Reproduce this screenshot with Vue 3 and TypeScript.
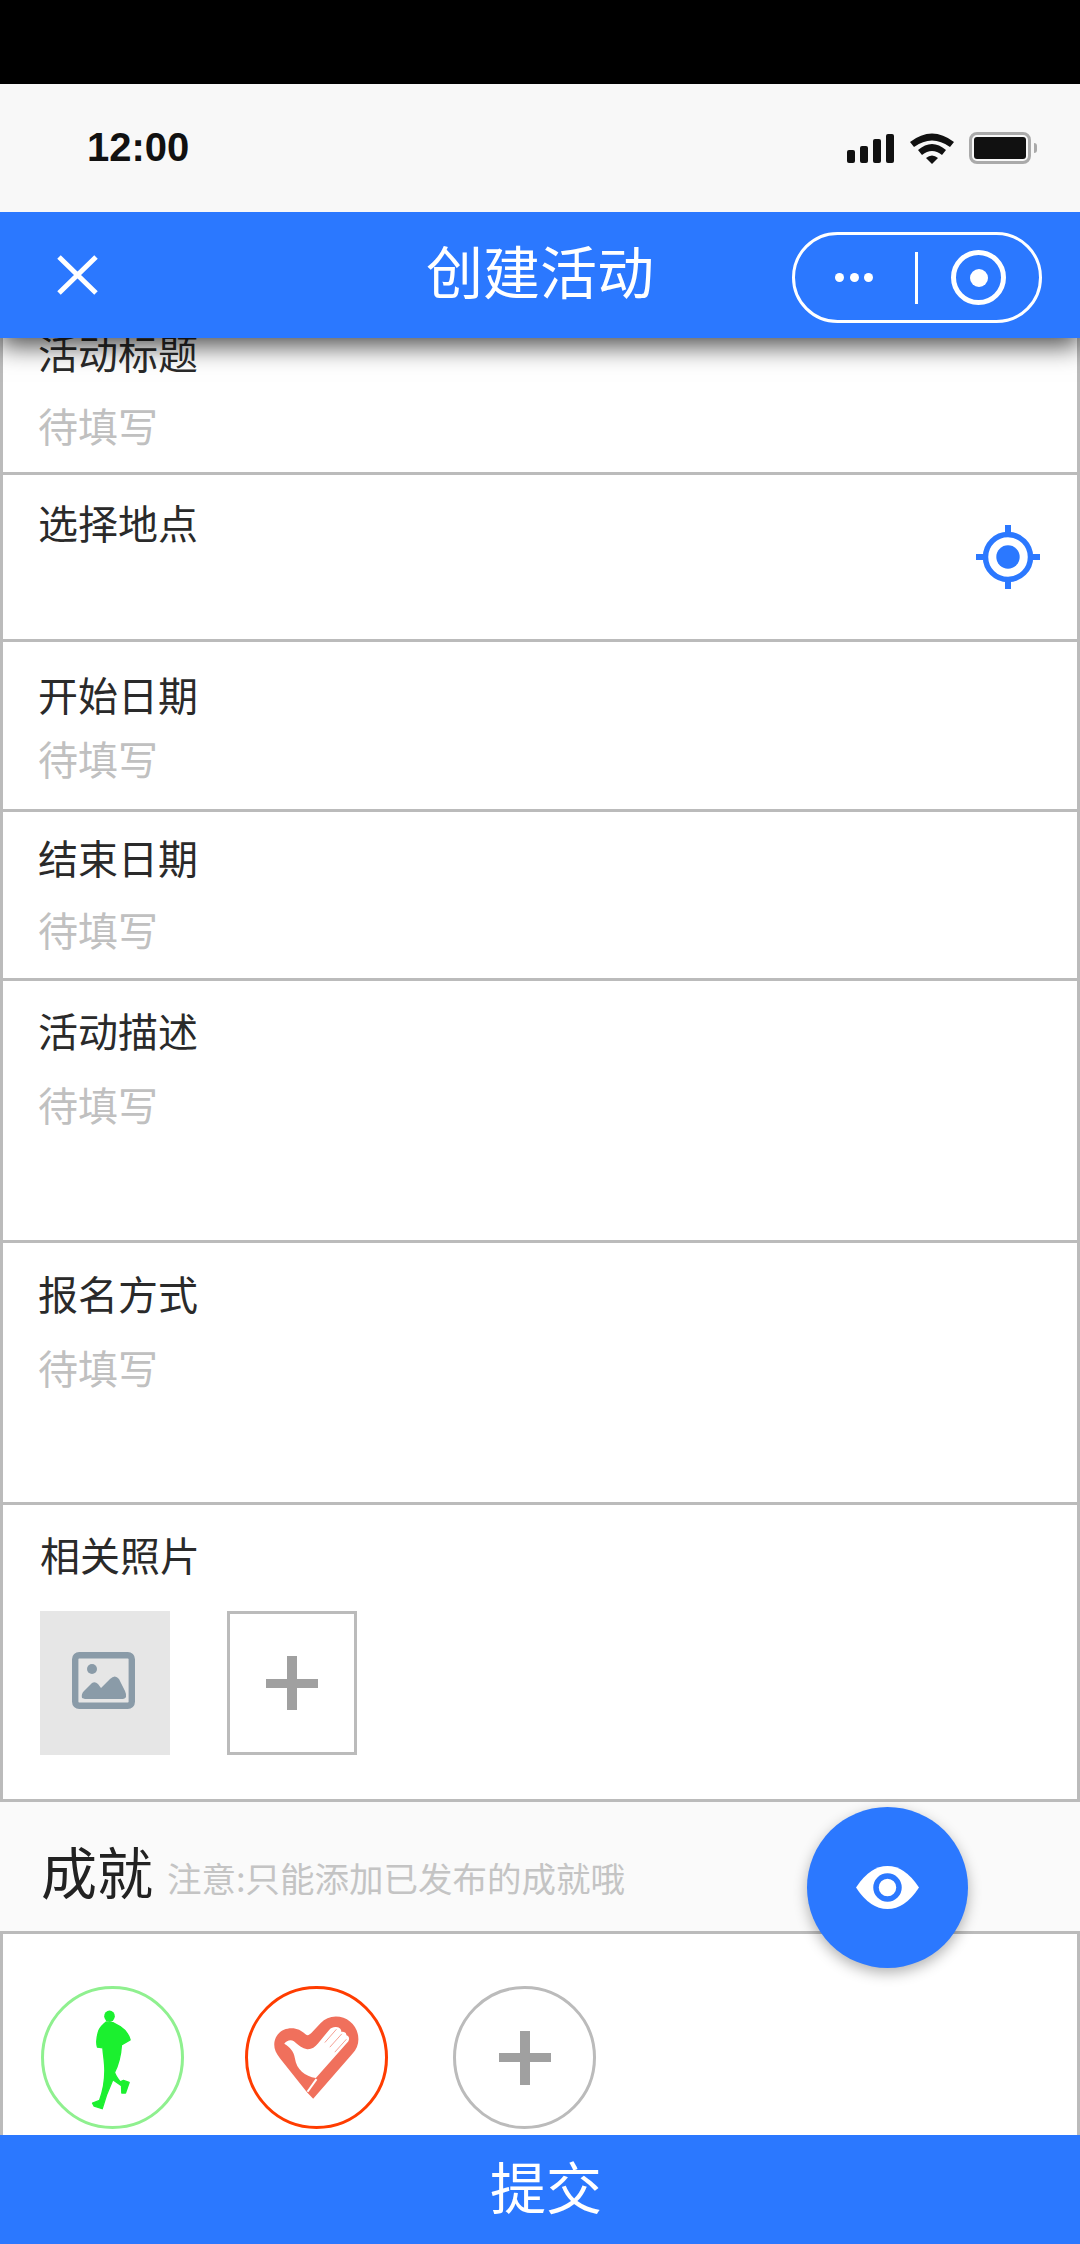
<script setup lang="ts">
interface Field {
  label: string
  cls: string
  placeholder?: string
}

const fields: Field[] = [
  { label: '活动标题', cls: 'f-title', placeholder: '待填写' },
  { label: '选择地点', cls: 'f-place' },
  { label: '开始日期', cls: 'f-start', placeholder: '待填写' },
  { label: '结束日期', cls: 'f-end', placeholder: '待填写' },
  { label: '活动描述', cls: 'f-desc', placeholder: '待填写' },
  { label: '报名方式', cls: 'f-sign', placeholder: '待填写' },
]
</script>

<template>
  <div class="phone">
    <div class="notch"></div>
    <div class="status">
      <span class="time">12:00</span>
      <div class="status-icons">
        <div class="signal"><i></i><i></i><i></i><i></i></div>
        <svg class="wifi" viewBox="0 0 44 32" width="44" height="32">
          <path d="M0 10 Q22 -7 44 10 L40 15 Q22 2 4 15 Z" fill="#111" />
          <path d="M8 18 Q22 6 36 18 L32 23 Q22 15 12 23 Z" fill="#111" />
          <path d="M16 26 Q22 21 28 26 L22 32 Z" fill="#111" />
        </svg>
        <div class="battery"><div class="battery-fill"></div></div>
        <div class="battery-nub"></div>
      </div>
    </div>

    <div class="nav">
      <svg class="close" viewBox="0 0 41 40" width="41" height="40">
        <path d="M2 2 L39 38 M39 2 L2 38" stroke="#fff" stroke-width="5" fill="none" />
      </svg>
      <span class="nav-title">创建活动</span>
      <div class="capsule">
        <div class="dots"><i></i><i></i><i></i></div>
        <div class="capsule-line"></div>
        <div class="capsule-target"><div></div></div>
      </div>
    </div>

    <div class="scroll">
      <div class="form">
        <div v-for="f in fields" :key="f.label" class="field" :class="f.cls">
          <div class="label">{{ f.label }}</div>
          <div v-if="f.placeholder" class="placeholder">{{ f.placeholder }}</div>
          <svg v-if="f.cls === 'f-place'" class="locate" viewBox="0 0 64 64" width="64" height="64">
            <circle cx="32" cy="32" r="22.5" fill="none" stroke="#2b78ff" stroke-width="5.5" />
            <circle cx="32" cy="32" r="11.7" fill="#2b78ff" />
            <path d="M32 0 V10 M32 54 V64 M0 32 H10 M54 32 H64" stroke="#2b78ff" stroke-width="6" />
          </svg>
        </div>

        <div class="field f-photo">
          <div class="label">相关照片</div>
          <div class="photos">
            <div class="photo">
              <svg viewBox="0 0 63 57" width="63" height="57">
                <rect x="3.2" y="3.2" width="56.6" height="50.6" rx="4" fill="none" stroke="#8a9ba8" stroke-width="6.4" />
                <circle cx="20" cy="17" r="5" fill="#8a9ba8" />
                <path d="M10 46 Q9 42 12 39 L20 31 Q23 29 26 32 L29 36 L38 27 Q43 22 47 27 L53 39 Q56 46 51 47 L13 47 Z" fill="#8a9ba8" />
              </svg>
            </div>
            <div class="add-photo"><span class="plus"></span></div>
          </div>
        </div>
      </div>

      <div class="section">
        <span class="section-title">成就</span>
        <span class="section-note">注意:只能添加已发布的成就哦</span>
      </div>

      <div class="badges">
        <div class="badge badge-run">
          <svg viewBox="0 0 430 430" width="143" height="143">
            <g transform="translate(-62 -18)" fill="#1bf02f">
              <ellipse cx="268" cy="109" rx="16" ry="17" />
              <path
                d="M258 126 C248 136 238 142 234 158 C230 172 228 190 232 202 L248 204 C250 228 254 250 254 272 C254 300 248 335 238 362 L217 370 L222 379 L246 387 C252 365 262 335 278 300 L304 318 L305 340 L316 340 L327 308 L310 302 L300 306 C292 296 286 288 283 278 C296 252 302 225 304 195 L330 180 C326 165 318 152 300 140 L278 128 Z"
                stroke="#1bf02f"
                stroke-width="4"
                stroke-linejoin="round"
              />
            </g>
          </svg>
        </div>
        <div class="badge badge-heart">
          <svg viewBox="0 0 430 430" width="143" height="143">
            <g transform="translate(-45 -48)">
              <path
                d="M250 387 L232 368 L150 265 C138 250 133 238 133 225 C133 195 156 175 185 175 C203 175 216 183 228 194 C234 199 240 194 246 188 L272 160 C285 147 300 140 318 140 C356 140 386 170 386 208 C386 225 380 238 368 252 Z"
                fill="#f0705c"
              />
              <path
                d="M163 222 C170 212 182 208 192 214 C205 226 218 236 232 238 C245 239 255 232 265 220 L298 180 C305 172 315 170 322 172 C330 172 335 180 335 186 C345 184 350 190 350 196 C358 198 360 206 356 214 L258 325 C225 318 200 300 195 265 C192 245 180 232 163 222 Z"
                fill="#fff"
              />
              <path d="M285 218 L320 178 M300 232 L336 192 M315 247 L350 208" stroke="#f0705c" stroke-width="2" fill="none" />
              <path d="M233 366 L260 328" stroke="#fff" stroke-width="6" fill="none" />
            </g>
          </svg>
        </div>
        <div class="badge badge-add"><span class="plus"></span></div>
      </div>

      <div class="fab">
        <svg viewBox="0 0 63 43" width="63" height="43">
          <path d="M0 21.5 Q14 0 31.5 0 Q49 0 63 21.5 Q49 43 31.5 43 Q14 43 0 21.5 Z" fill="#fff" />
          <circle cx="31.5" cy="21.5" r="11.5" fill="#fff" stroke="#2b78ff" stroke-width="5.5" />
        </svg>
      </div>
    </div>

    <div class="submit">提交</div>
  </div>
</template>

<style scoped>
.phone {
  width: 1080px;
  height: 2244px;
  display: flex;
  flex-direction: column;
  overflow: hidden;
  background: #fff;
  font-family: "Noto Sans CJK SC", "Liberation Sans", sans-serif;
  color: #222;
}

.notch {
  height: 84px;
  background: #000;
  flex-shrink: 0;
}

.status {
  height: 128px;
  flex-shrink: 0;
  background: #f8f8f8;
  display: flex;
  align-items: center;
  justify-content: space-between;
  padding: 0 43px 2px 87px;
  box-sizing: border-box;
}

.time {
  font-family: "Liberation Sans", sans-serif;
  font-weight: 700;
  font-size: 40px;
  color: #111;
}

.status-icons {
  display: flex;
  align-items: center;
  margin-top: 2px;
}

.signal {
  display: flex;
  align-items: flex-end;
  gap: 5px;
  height: 30px;
  margin-right: 16px;
}

.signal i {
  width: 8px;
  background: #111;
  border-radius: 2px;
}

.signal i:nth-child(1) { height: 13px; }
.signal i:nth-child(2) { height: 17px; }
.signal i:nth-child(3) { height: 24px; }
.signal i:nth-child(4) { height: 29px; }

.wifi {
  margin-right: 15px;
}

.battery {
  width: 62px;
  height: 32px;
  box-sizing: border-box;
  border: 3px solid #aaa;
  border-radius: 8px;
  padding: 2px;
}

.battery-fill {
  height: 100%;
  background: #111;
  border-radius: 3px;
}

.battery-nub {
  width: 3px;
  height: 10px;
  background: #aaa;
  border-radius: 0 3px 3px 0;
  margin-left: 3px;
}

.nav {
  height: 126px;
  flex-shrink: 0;
  background: #2b78ff;
  position: relative;
  z-index: 2;
  box-shadow: 0 8px 24px rgba(0, 0, 0, 0.7);
  clip-path: inset(0 0 -50px 0);
  display: flex;
  align-items: center;
  justify-content: space-between;
  padding: 0 38px 0 57px;
  box-sizing: border-box;
}

.nav-title {
  position: absolute;
  left: 0;
  right: 0;
  text-align: center;
  font-size: 57px;
  line-height: 114px;
  color: #fff;
  top: 0;
}

.capsule {
  width: 250px;
  height: 91px;
  box-sizing: border-box;
  border: 3px solid #fff;
  border-radius: 46px;
  display: flex;
  align-items: center;
  position: relative;
  z-index: 1;
  margin-top: 5px;
}

.dots {
  display: flex;
  gap: 5.5px;
  margin-left: 40px;
}

.dots i {
  width: 9px;
  height: 9px;
  border-radius: 50%;
  background: #fff;
}

.capsule-line {
  width: 3px;
  height: 52px;
  background: #fff;
  margin-left: 42px;
}

.capsule-target {
  width: 55px;
  height: 55px;
  box-sizing: border-box;
  border: 5.5px solid #fff;
  border-radius: 50%;
  margin-left: 33px;
  display: flex;
  align-items: center;
  justify-content: center;
}

.capsule-target div {
  width: 18px;
  height: 18px;
  border-radius: 50%;
  background: #fff;
}

.scroll {
  flex: 1;
  min-height: 0;
  overflow: hidden;
  position: relative;
}

.form {
  margin-top: -30px;
}

.field {
  position: relative;
  box-sizing: border-box;
  border-left: 3px solid #bbb;
  border-right: 3px solid #bbb;
  border-bottom: 3px solid #bbb;
  padding: 0 0 0 35px;
}

.label {
  font-size: 40px;
  line-height: 56px;
  color: #2a2a2a;
}

.placeholder {
  font-size: 40px;
  line-height: 56px;
  color: #c0c0c0;
}

.f-title {
  height: 167px;
  padding-top: 16px;
}

.f-title .placeholder { margin-top: 17px; }

.f-place {
  height: 167px;
  padding-top: 19px;
}

.locate {
  position: absolute;
  right: 37px;
  top: 50px;
}

.f-start {
  height: 170px;
  padding-top: 24px;
}

.f-start .placeholder { margin-top: 8px; }

.f-end {
  height: 169px;
  padding-top: 17px;
}

.f-end .placeholder { margin-top: 16px; }

.f-desc {
  height: 262px;
  padding-top: 21px;
}

.f-desc .placeholder { margin-top: 18px; }

.f-sign {
  height: 262px;
  padding-top: 22px;
}

.f-sign .placeholder { margin-top: 18px; }

.f-photo {
  height: 297px;
  padding-top: 21px;
  padding-left: 37px;
}

.photos {
  display: flex;
  gap: 57px;
  margin-top: 29px;
}

.photo {
  width: 130px;
  height: 144px;
  background: #e6e6e6;
  display: flex;
  align-items: center;
  justify-content: center;
}

.photo svg {
  margin: -6px 0 0 -3px;
}

.add-photo {
  width: 130px;
  height: 144px;
  box-sizing: border-box;
  border: 3px solid #bbb;
  display: flex;
  align-items: center;
  justify-content: center;
}

.plus {
  display: block;
  width: 52px;
  height: 54px;
  background:
    linear-gradient(#a0a0a0, #a0a0a0) center / 100% 9px no-repeat,
    linear-gradient(#a0a0a0, #a0a0a0) center / 10px 100% no-repeat;
}

.section {
  height: 132px;
  box-sizing: border-box;
  background: #fafafa;
  border-bottom: 3px solid #bbb;
  display: flex;
  align-items: center;
  padding-left: 41px;
}

.section-title {
  font-size: 56px;
  color: #222;
  margin-top: 6px;
}

.section-note {
  font-size: 34.5px;
  color: #c4c4c4;
  margin-left: 14px;
  margin-top: 20px;
}

.badges {
  border-left: 3px solid #bbb;
  border-right: 3px solid #bbb;
  display: flex;
  gap: 61px;
  padding: 52px 0 0 38px;
  height: 300px;
  box-sizing: border-box;
}

.badge {
  width: 143px;
  height: 143px;
  box-sizing: border-box;
  border-radius: 50%;
  border: 3px solid #bbb;
  display: flex;
  align-items: center;
  justify-content: center;
  flex-shrink: 0;
}

.badge svg {
  flex-shrink: 0;
}

.badge-run { border-color: #8ff08f; }
.badge-heart { border-color: #ff3c00; }
.badge-add { margin-left: 4px; }

.fab {
  position: absolute;
  left: 807px;
  top: 1469px;
  width: 161px;
  height: 161px;
  border-radius: 50%;
  background: #2b78ff;
  box-shadow: 0 5px 14px rgba(0, 0, 0, 0.3);
  display: flex;
  align-items: center;
  justify-content: center;
}

.submit {
  height: 109px;
  flex-shrink: 0;
  background: #2b78ff;
  color: #fff;
  font-size: 56px;
  line-height: 100px;
  text-align: center;
  padding-left: 12px;
  position: relative;
  z-index: 1;
}
</style>
